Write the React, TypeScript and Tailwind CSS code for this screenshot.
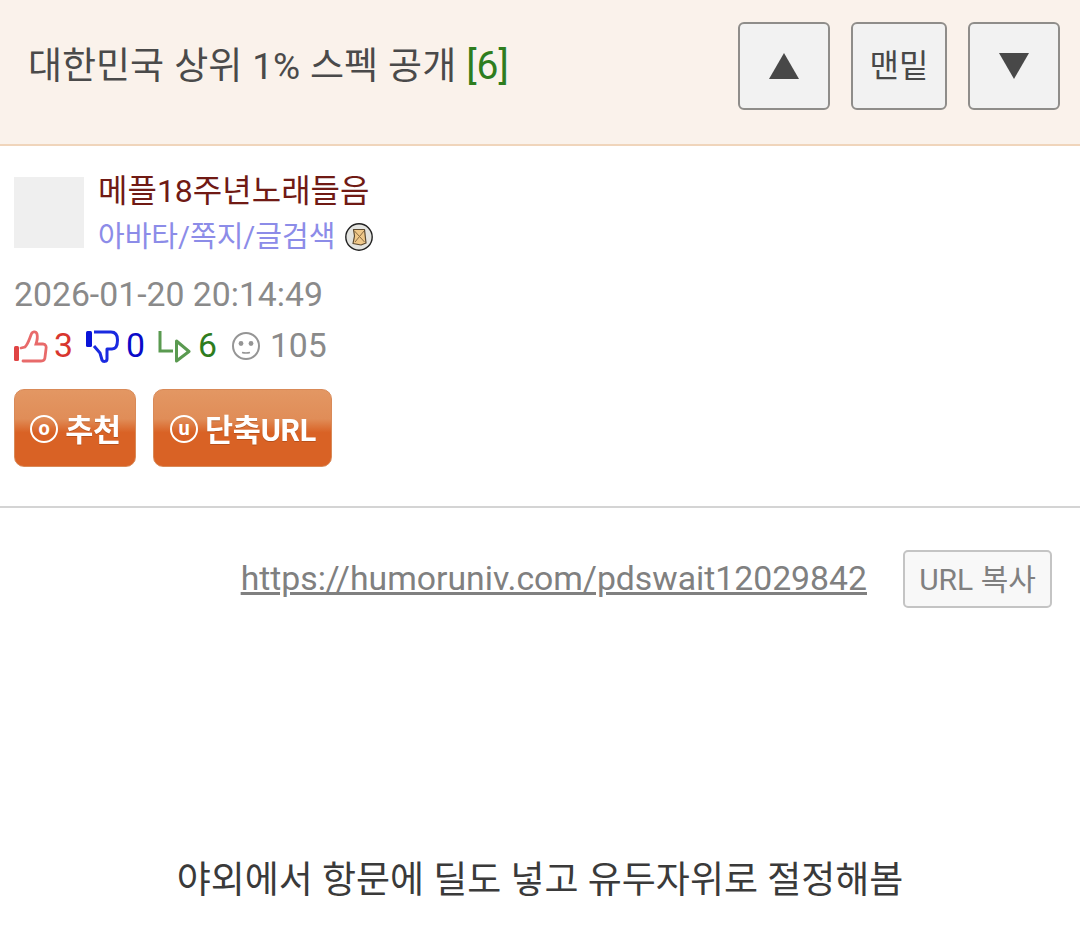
import React from 'react';

const FONT = "font-['Roboto','Noto_Sans_CJK_KR',sans-serif]";

function ThumbUp() {
  return (
    <svg width="34" height="34" viewBox="0 0 34 34" fill="none">
      <rect x="0" y="17" width="5" height="15" rx="1.5" fill="#e04444" />
      <path d="M7 19 L11 18 C14 15 15 11 17 6 C18 2 22 2 23 5 C24 9 23 12 22 15 L29 15 C32 15 32.5 18 32 20 L31 28 C31 31 29 32 27 32 L9 32" stroke="#e86a6a" strokeWidth="2.8" strokeLinecap="round" />
    </svg>
  );
}

function ThumbDown() {
  return (
    <svg width="34" height="34" viewBox="0 0 34 34" fill="none">
      <rect x="0" y="2" width="6" height="16" rx="1.5" fill="#0a14d8" />
      <path d="M8 3 L25 3 C30 3 31.5 7 31.5 11 C31.5 16 30 20 26 20 L21 20 L21 30 C21 33 17 33 16 31 L14 24 L8 17" stroke="#1a2ae0" strokeWidth="3" strokeLinejoin="round" />
    </svg>
  );
}

function ReplyIcon() {
  return (
    <svg width="34" height="34" viewBox="0 0 34 34" fill="none">
      <path d="M2 2 L2 22 L15 22" stroke="#5a9a50" strokeWidth="3" />
      <path d="M18.5 12 L31 22.5 L18.5 32 Z" stroke="#5a9a50" strokeWidth="3" strokeLinejoin="round" />
    </svg>
  );
}

function Face() {
  return (
    <svg width="30" height="30" viewBox="0 0 30 30" fill="none">
      <circle cx="15" cy="15" r="13" stroke="#959595" strokeWidth="2" />
      <circle cx="10" cy="12.5" r="2.4" fill="#959595" />
      <circle cx="20" cy="12.5" r="2.4" fill="#959595" />
      <path d="M11 21.5 Q15 22.5 19 21.5" stroke="#959595" strokeWidth="1.6" />
    </svg>
  );
}

function NoteBadge() {
  return (
    <svg width="30" height="30" viewBox="0 0 30 30" fill="none">
      <circle cx="15" cy="15" r="13.2" fill="#e4e4e0" stroke="#222" strokeWidth="1.4" />
      <path d="M9.5 7.5 L20.5 7.5 L22 21 L17 23 L9 21.5 L10.5 14 Z" fill="#efc88a" stroke="#5c4a30" strokeWidth="1.2" strokeLinejoin="round" />
      <path d="M10.5 9 L20.5 20 M20 9 L11 20" stroke="#8a6c44" strokeWidth="1" />
    </svg>
  );
}

function OrangeButton({ letter, label, width }: { letter: string; label: string; width: string }) {
  return (
    <button className={`${width} h-[78px] rounded-[10px] border border-[#d98a58] bg-[linear-gradient(to_bottom,#e39763_0%,#e08d58_38%,#d96225_56%,#d96225_100%)] flex items-center justify-center gap-[7px] pl-[1px] text-white`}>
      <span className="w-[28px] h-[28px] mt-[2px] rounded-full border-2 border-white flex items-center justify-center text-[20px] font-bold leading-none pb-[3px]">{letter}</span>
      <span className="text-[30.5px] font-bold tracking-[-0.3px] leading-[40px] pt-[6px] drop-shadow-[0_1px_0_rgba(120,50,10,0.35)]">{label}</span>
    </button>
  );
}

function NavButton({ width, children }: { width: string; children: React.ReactNode }) {
  return (
    <button className={`${width} h-[88px] rounded-[6px] border-2 border-[#8f8d8a] bg-[#f2f2f2] flex items-center justify-center text-[#484848] text-[32px]`}>
      {children}
    </button>
  );
}

export default function App() {
  return (
    <div className={`${FONT} w-[1080px] h-[938px] overflow-hidden bg-white`}>
      {/* Title bar */}
      <div className="h-[146px] bg-[#faf2eb] border-b-2 border-[#f0d5bb] flex items-start justify-between pt-[22px] pl-[28px] pr-[20px]">
        <h1 className="text-[37px] font-normal text-[#4a4a4a] mt-[19px] leading-[50px] [word-spacing:0.8px]">
          대한민국 상위 1% 스펙 공개 <span className="text-[#2e7d1e] text-[39px]">[6]</span>
        </h1>
        <div className="flex gap-[21px]">
          <NavButton width="w-[92px]">
            <svg width="32" height="28" viewBox="0 0 32 28"><path d="M16 1 L31 27 L1 27 Z" fill="#484848" /></svg>
          </NavButton>
          <NavButton width="w-[96px]">맨밑</NavButton>
          <NavButton width="w-[92px]">
            <svg width="32" height="28" viewBox="0 0 32 28"><path d="M1 1 L31 1 L16 27 Z" fill="#484848" /></svg>
          </NavButton>
        </div>
      </div>

      {/* Author info */}
      <div className="h-[362px] border-b-2 border-[#d4d4d4] pl-[14px] pt-[24px]">
        <div className="flex gap-[14px]">
          <div className="w-[70px] h-[71px] mt-[7px] bg-[#efefef]" />
          <div>
            <div className="text-[32px] leading-[42px] text-[#701a14]">메플18주년노래들음</div>
            <div className="flex items-center gap-[9px] mt-[3px]">
              <span className="text-[29px] leading-[44px] text-[#8c8ce8]">아바타/쪽지/글검색</span>
              <NoteBadge />
            </div>
          </div>
        </div>
        <div className="text-[33.75px] leading-[44px] text-[#8a8a8a] mt-[14px]">2026-01-20 20:14:49</div>
        <div className="flex items-center h-[44px] mt-[7px] text-[33.75px]">
          <ThumbUp />
          <span className="text-[#d8362e] ml-[6px]">3</span>
          <span className="ml-[13px] flex"><ThumbDown /></span>
          <span className="text-[#0a0ac8] ml-[6px]">0</span>
          <span className="ml-[13px] flex"><ReplyIcon /></span>
          <span className="text-[#2e7d1e] ml-[6px]">6</span>
          <span className="ml-[14px] flex"><Face /></span>
          <span className="text-[#8a8a8a] ml-[9px]">105</span>
        </div>
        <div className="flex gap-[17px] mt-[21px]">
          <OrangeButton letter="o" label="추천" width="w-[122px]" />
          <OrangeButton letter="u" label="단축URL" width="w-[179px]" />
        </div>
      </div>

      {/* Short URL */}
      <div className="flex items-center justify-end gap-[36px] pr-[28px] pt-[42px]">
        <a href="#" className="text-[33.75px] leading-[58px] text-[#808080] underline">https://humoruniv.com/pdswait12029842</a>
        <button className="w-[149px] h-[58px] rounded-[5px] border-2 border-[#c4c4c4] bg-[#f8f8f8] text-[#808080] text-[30px]">URL 복사</button>
      </div>

      {/* Post body */}
      <p className="text-center text-[37px] leading-[50px] text-[#3a3a3a] mt-[248px]">야외에서 항문에 딜도 넣고 유두자위로 절정해봄</p>
    </div>
  );
}
